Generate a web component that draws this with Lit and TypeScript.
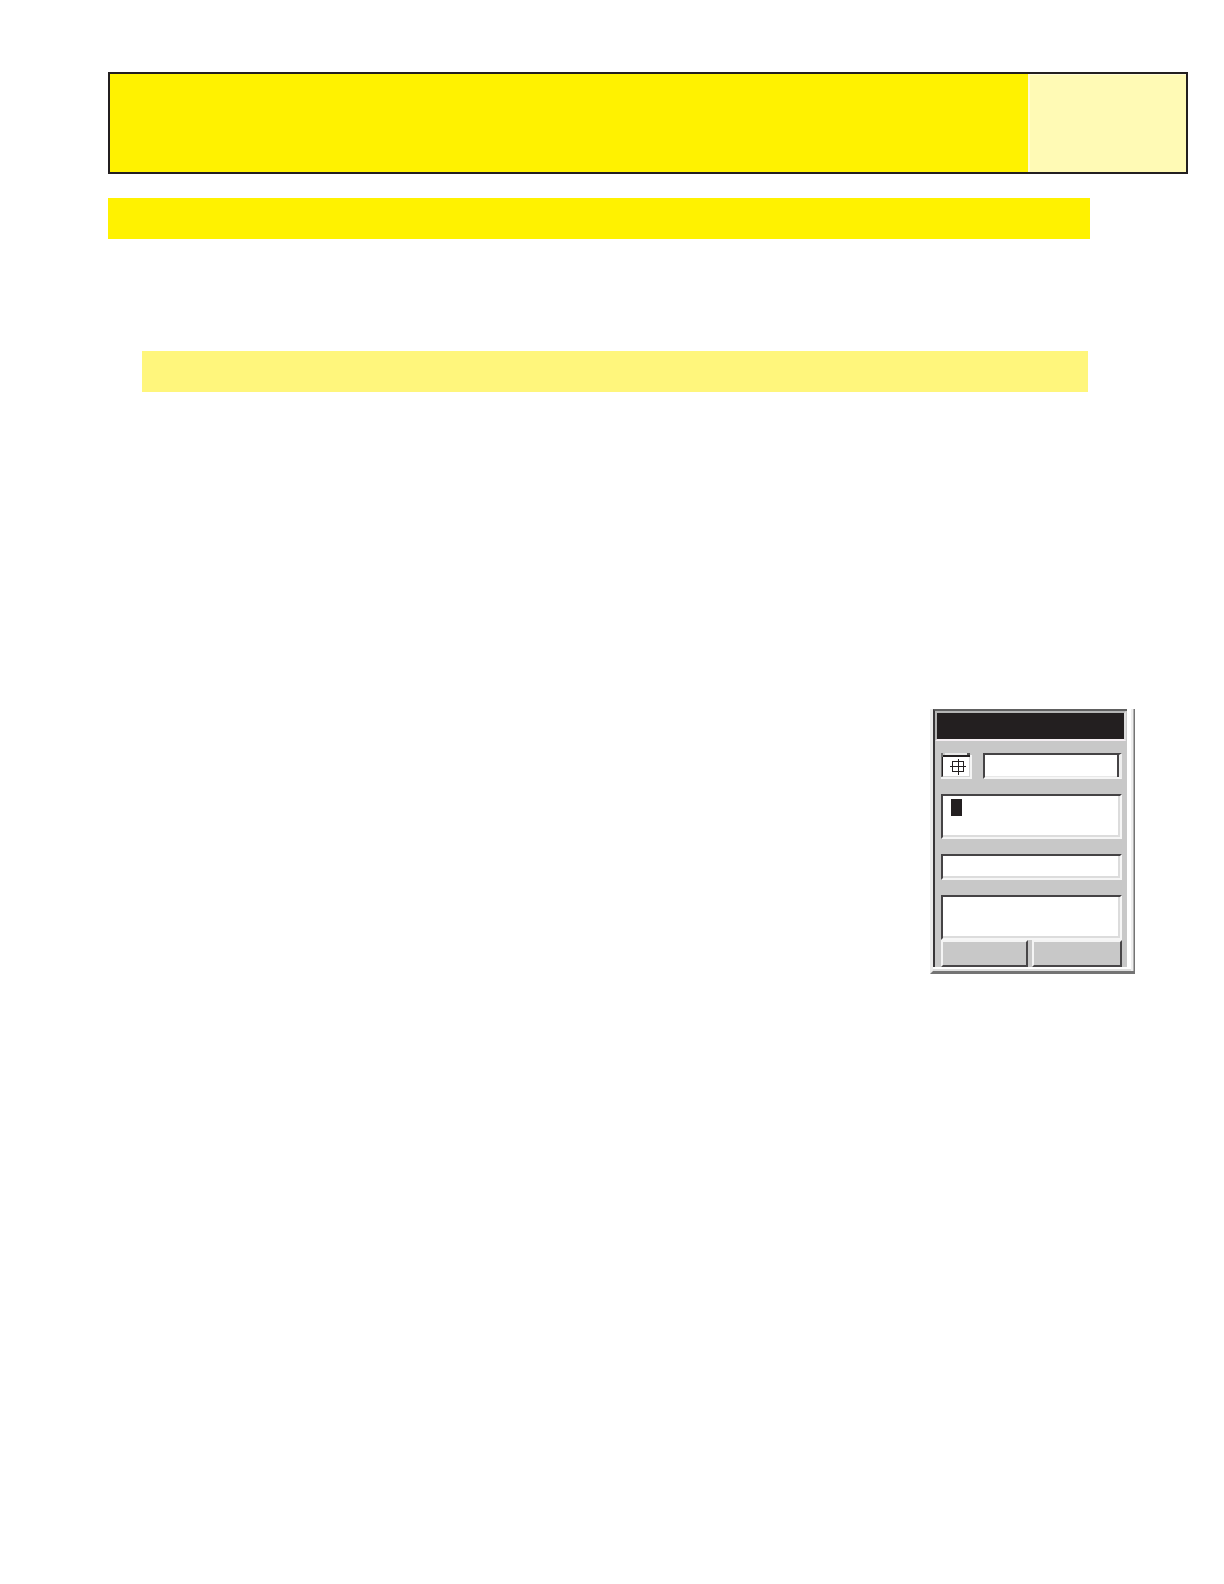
import { LitElement, html, css } from "lit";
import { customElement } from "lit/decorators.js";

@customElement("data-terminal")
class DataTerminal extends LitElement {
  static styles = css`
    :host {
      display: block;
      box-sizing: border-box;
      width: 205px;
      border-left: 3px solid #ececec;
      border-bottom: 3px solid #747474;
      background: #ffffff;
      box-shadow: inset -1px 0 #747474, inset -2px 0 #b0b0b0, inset -4px 0 #eeeeee,
        inset 0 -2px #dedede;
      padding: 0 8px 4px 0;
      font: 12px/16px "Liberation Sans", sans-serif;
    }
    * {
      box-sizing: border-box;
    }
    .panel {
      display: flex;
      flex-direction: column;
      background: #c8c8c8;
      border-top: 2px solid #606060;
      border-left: 2px solid #383638;
    }
    .title {
      height: 30px;
      margin-right: 1px;
      border: 2px solid #b4b4b4;
      border-bottom-color: #f4eef2;
      border-right-color: #dcdcdc;
      background: #231f20;
    }
    .form {
      display: flex;
      flex-direction: column;
      gap: 15px;
      padding: 12px 5px 0 6px;
    }
    .row {
      display: flex;
      gap: 11px;
    }
    .box {
      display: flex;
      width: 100%;
      min-width: 0;
      margin: 0;
      padding: 0;
      border: 2px solid #454345;
      border-right-color: #f6f6f6;
      border-bottom-color: #f6f6f6;
      border-radius: 0;
      outline: 0;
      background: #ffffff;
      box-shadow: inset -2px -2px #dcdcdc;
      font: inherit;
      resize: none;
    }
    .short {
      height: 26px;
    }
    .tall {
      height: 45px;
    }
    .icon {
      flex: none;
      width: 31px;
      height: 26px;
      padding: 0;
      border: 0;
      background: none;
    }
    .icon svg {
      display: block;
    }
    .name {
      border-right: 3px solid #eeeeee;
      box-shadow: inset -2px 0 #454345, inset 0 -1px #e8e8e8;
    }
    .entry {
      gap: 2px;
      padding: 3px 4px 0 8px;
    }
    .cursor {
      flex: none;
      width: 11px;
      height: 17px;
      background: #231f20;
    }
    .plain {
      width: 100%;
      min-width: 0;
      height: 17px;
      padding: 0;
      border: 0;
      outline: 0;
      background: transparent;
      font: inherit;
    }
    .keys {
      display: grid;
      grid-template-columns: 87fr 90fr;
      gap: 4px;
      padding: 0 5px 0 6px;
    }
    .key {
      height: 27px;
      padding: 0;
      border: 2px solid #f4f4f4;
      border-right-color: #484648;
      border-bottom-color: #484648;
      border-radius: 0;
      background: #c8c8c8;
      font: inherit;
    }
  `;

  render() {
    return html`
      <div class="panel">
        <div class="title"></div>
        <div class="form">
          <div class="row">
            <button class="icon" type="button" aria-label="Target">
              <svg width="31" height="26" viewBox="0 0 31 26" shape-rendering="crispEdges">
                <path fill="#f4f4f4" d="M0 24h31v2H0zM29 2h2v24h-2z" />
                <path fill="#fff" d="M2 2h26v22H2z" />
                <path fill="#707070" d="M0 0h2v24H0z" />
                <path fill="#e8e8e8" d="M4 0h22v2H4z" />
                <path fill="#231f20" d="M2 2h27v2H2zM1 4h1v19H1z" />
                <path fill="#555" d="M26 0h3v2h-3z" />
                <path fill="#d4d4d4" d="M28 4h1v20h-1zM2 23h26v1H2z" />
                <path fill="none" stroke="#231f20" d="M11.500 8.500h11v10h-11zM17.500 6v16M9 13.500h16" />
              </svg>
            </button>
            <input class="box short name" type="text" aria-label="Name" />
          </div>
          <div class="box tall entry">
            <span class="cursor"></span>
            <input class="plain" type="text" aria-label="Entry" />
          </div>
          <input class="box short" type="text" aria-label="Value" />
          <textarea class="box tall" aria-label="Notes"></textarea>
        </div>
        <div class="keys">
          <button class="key" type="button" aria-label="Left key"></button>
          <button class="key" type="button" aria-label="Right key"></button>
        </div>
      </div>
    `;
  }
}

@customElement("app-root")
class AppRoot extends LitElement {
  static styles = css`
    :host {
      display: block;
      box-sizing: border-box;
      min-height: 100vh;
      padding: 72px 36px 72px 108px;
      background: #ffffff;
    }
    .page {
      display: flex;
      flex-direction: column;
    }
    .banner {
      display: flex;
      border: 2px solid #231f20;
      background: #fff200;
    }
    .heading {
      flex: 1;
      height: 98px;
    }
    .tab {
      width: 158px;
      border-left: 2px solid #fffbd5;
      border-top: 1px solid #fffcd8;
      box-sizing: border-box;
      background: #fffab5;
    }
    .section {
      height: 41px;
      margin: 24px 98px 0 0;
      background: #fff200;
    }
    .subsection {
      height: 41px;
      margin: 112px 100px 0 34px;
      background: #fff67c;
    }
    .figure {
      display: flex;
      justify-content: flex-end;
      padding: 317px 53px 0 0;
    }
  `;

  render() {
    return html`
      <main class="page">
        <header class="banner">
          <div class="heading"></div>
          <div class="tab"></div>
        </header>
        <div class="section"></div>
        <div class="subsection"></div>
        <div class="figure"><data-terminal></data-terminal></div>
      </main>
    `;
  }
}
